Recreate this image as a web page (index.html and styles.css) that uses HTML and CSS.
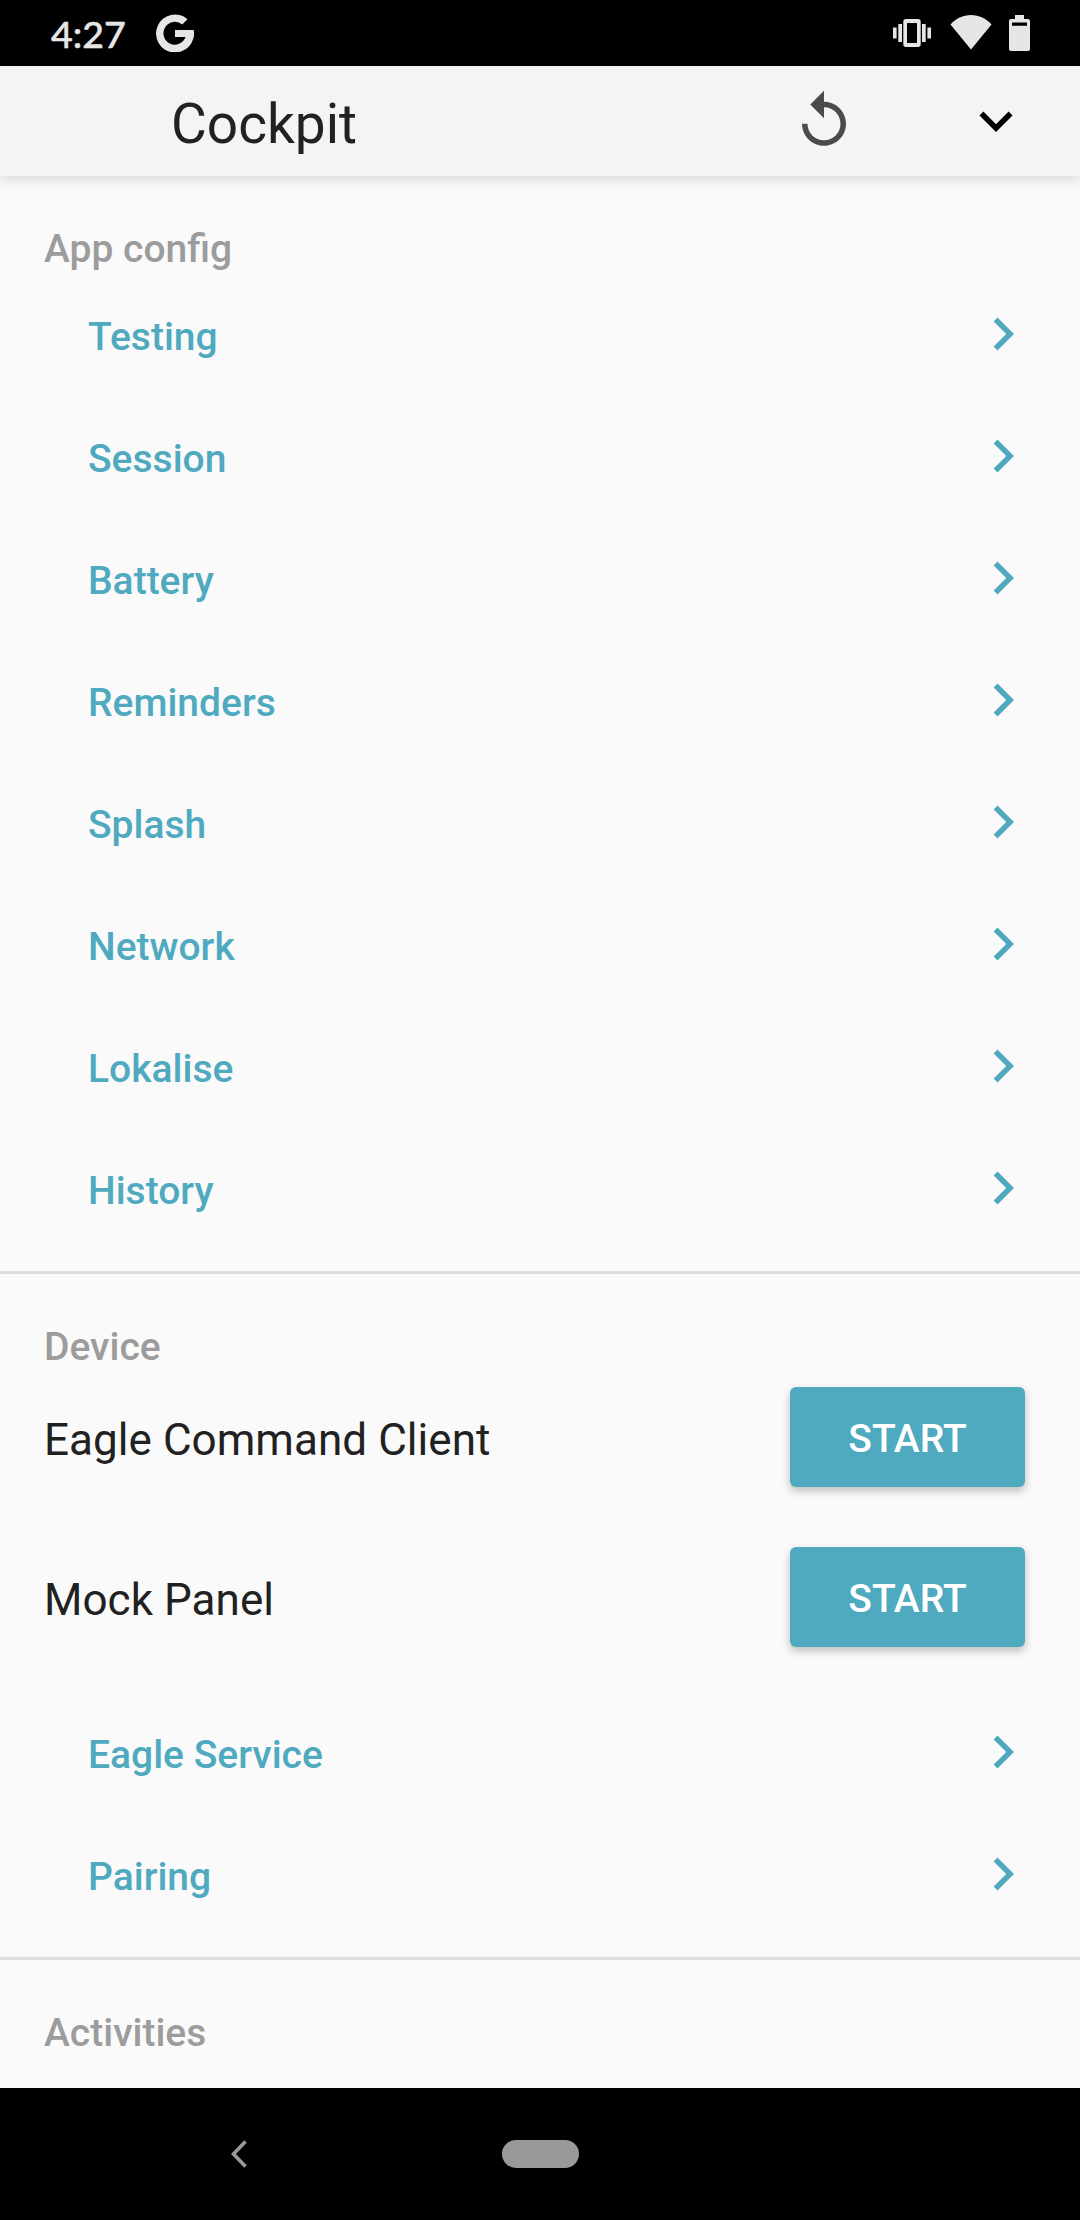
FILE: index.html
```html
<!DOCTYPE html>
<html lang="en">
<head>
<meta charset="utf-8">
<title>Cockpit</title>
<link rel="stylesheet" href="styles.css">
</head>
<body>
<svg width="0" height="0" class="defs">
  <symbol id="chevron" viewBox="0 0 24 24"><path d="M10 6L8.59 7.41 13.17 12l-4.58 4.59L10 18l6-6z"/></symbol>
</svg>
<div class="screen">
  <div class="status-bar">
    <span class="clock">4:27</span>
    <svg class="google" viewBox="0 0 38 38"><path d="M31.500 5.200A19 19 0 1 0 37.700 16H19v7.100h10.600A11.400 11.400 0 1 1 26.200 10.500z"/></svg>
    <div class="status-icons">
      <svg width="38" height="28" viewBox="0 0 38 28"><path fill-rule="evenodd" d="M13 0h12a2.700 2.700 0 0 1 2.700 2.700v22.600A2.700 2.700 0 0 1 25 28H13a2.700 2.700 0 0 1-2.700-2.700V2.700A2.700 2.700 0 0 1 13 0zM14 4v20h10V4zM0 8.500h3.600v11H0zM5.300 5H9v18H5.300zM29 5h3.700v18H29zM34.400 8.500H38v11h-3.600z"/></svg>
      <svg width="42" height="35" viewBox="0 0 42 35"><path d="M0.500 9.500C6 3.500 13 0 21 0s15 3.500 20.500 9.500L21 34.500z"/></svg>
      <svg width="21" height="36" viewBox="0 0 21 36"><path fill-rule="evenodd" d="M6 0h9v4h4a2 2 0 0 1 2 2v28a2 2 0 0 1-2 2H2a2 2 0 0 1-2-2V6a2 2 0 0 1 2-2h4zM3 7.500v3.200h15V7.500z"/></svg>
    </div>
  </div>
  <header class="app-bar">
    <h1>Cockpit</h1>
    <svg class="icon replay" viewBox="0 0 24 24"><path d="M12 5V1L7 6l5 5V7c3.310 0 6 2.690 6 6s-2.690 6-6 6-6-2.690-6-6H4c0 4.420 3.580 8 8 8s8-3.580 8-8-3.580-8-8-8z"/></svg>
    <svg class="icon" viewBox="0 0 24 24"><path d="M16.590 8.590L12 13.170 7.410 8.590 6 10l6 6 6-6z"/></svg>
  </header>
  <main class="content">
    <section>
      <h2>App config</h2>
      <a class="link-row"><span>Testing</span><svg class="icon"><use href="#chevron"/></svg></a>
      <a class="link-row"><span>Session</span><svg class="icon"><use href="#chevron"/></svg></a>
      <a class="link-row"><span>Battery</span><svg class="icon"><use href="#chevron"/></svg></a>
      <a class="link-row"><span>Reminders</span><svg class="icon"><use href="#chevron"/></svg></a>
      <a class="link-row"><span>Splash</span><svg class="icon"><use href="#chevron"/></svg></a>
      <a class="link-row"><span>Network</span><svg class="icon"><use href="#chevron"/></svg></a>
      <a class="link-row"><span>Lokalise</span><svg class="icon"><use href="#chevron"/></svg></a>
      <a class="link-row"><span>History</span><svg class="icon"><use href="#chevron"/></svg></a>
    </section>
    <section>
      <h2>Device</h2>
      <div class="actions">
        <div class="action-row"><span>Eagle Command Client</span><button>START</button></div>
        <div class="action-row"><span>Mock Panel</span><button>START</button></div>
      </div>
      <a class="link-row"><span>Eagle Service</span><svg class="icon"><use href="#chevron"/></svg></a>
      <a class="link-row"><span>Pairing</span><svg class="icon"><use href="#chevron"/></svg></a>
    </section>
    <section>
      <h2>Activities</h2>
    </section>
  </main>
  <nav class="nav-bar">
    <svg width="16" height="28" viewBox="0 0 16 28"><path d="M14.500 1.500L2.500 14l12 12.500" fill="none" stroke="#999" stroke-width="3.600"/></svg>
    <span class="home"></span>
  </nav>
</div>
</body>
</html>
```
FILE: styles.css
```css
* { box-sizing: border-box; }
body { margin: 0; font-family: Roboto, sans-serif; background: #fafafa; }
.defs { display: block; }
.screen { width: 1080px; height: 2220px; display: flex; flex-direction: column; overflow: hidden; }
.status-bar {
  height: 66px; flex: none; display: flex; align-items: center;
  padding: 0 50px; background: #000; color: #e6e6e6; fill: #e6e6e6;
}
.clock { width: 106px; padding: 1px 0 0 1px; font: 500 37.5px/66px Lato, sans-serif; -webkit-text-stroke: .5px #e6e6e6; }
.google { width: 38px; height: 38px; }
.status-icons { margin-left: auto; display: flex; align-items: center; gap: 19px; }
.status-icons svg:nth-child(2) { margin-right: -2px; margin-bottom: 2px; }
.app-bar {
  height: 110px; flex: none; display: flex; align-items: center;
  padding: 0 51px 0 171px; background: #f4f4f4; position: relative;
  box-shadow: 0 4px 11px rgba(0, 0, 0, .13);
}
h1 { margin: 0; padding-top: 6px; flex: 1; font-size: 55px; font-weight: 400; color: #212121; }
.icon { width: 66px; height: 66px; flex: none; }
.replay { fill: #4b4b4b; margin-right: 106px; }
.content { flex: 1; overflow: hidden; }
section { padding-bottom: 22px; border-bottom: 3px solid #ddd; }
section:last-child { border: 0; }
h2 { margin: 0; height: 97px; padding-top: 50px; font-size: 39px; line-height: 46px; font-weight: 500; color: #9c9c9c; padding-left: 44px; }
.link-row {
  height: 122px; display: flex; align-items: center; justify-content: space-between;
  padding: 0 44px 0 88px; font-size: 39px; line-height: 46px; font-weight: 500; color: #4fa9bf; fill: #4fa9bf;
}
.link-row span { padding-top: 6px; }
.actions { display: flex; flex-direction: column; gap: 60px; padding: 16px 55px 44px 44px; }
.action-row { display: flex; align-items: center; justify-content: space-between; font-size: 44px; letter-spacing: .05px; color: #212121; }
.action-row span { padding-top: 6px; }
button {
  width: 235px; height: 100px; padding: 4px 0 0; border: 0; border-radius: 6px;
  background: #4fa9bf; color: #fff; font: 500 39px/46px Roboto, sans-serif;
  box-shadow: 0 4px 8px rgba(0, 0, 0, .25);
}
.nav-bar { height: 132px; flex: none; display: flex; align-items: center; gap: 255px; padding-left: 231px; background: #000; }
.home { width: 77px; height: 28px; border-radius: 14px; background: #999; }
```
